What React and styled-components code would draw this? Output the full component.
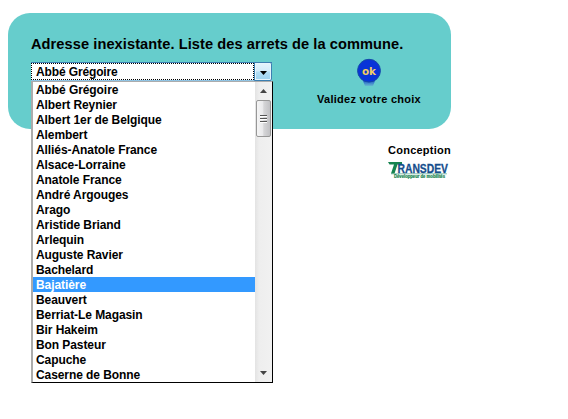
import React from 'react';
import styled, { createGlobalStyle } from 'styled-components';

const GlobalStyle = createGlobalStyle`
  * { box-sizing: border-box; }
  body {
    margin: 0;
    background: #fff;
    color: #000;
    font-family: "Liberation Sans", Arial, sans-serif;
    font-weight: bold;
    overflow: hidden;
  }
`;

const Page = styled.main`
  width: 568px;
  height: 419px;
  padding: 13px 0 0 8px;
`;

const Panel = styled.section`
  width: 443px;
  height: 116px;
  padding: 22px 0 0 23px;
  border-radius: 22px;
  background: #66cdcc;
`;

const Title = styled.h1`
  margin: 0;
  height: 27px;
  font-size: 14.6px;
  line-height: 18px;
  letter-spacing: 0.08px;
  white-space: nowrap;
`;

const Fields = styled.div`
  display: flex;
`;

const Select = styled.div`
  position: relative;
  display: flex;
  width: 241px;
  height: 19px;
  background: #fff;
  border-top: 1px solid #3c7fb1;
  border-bottom: 1px solid #8fc3e3;
`;

const Value = styled.div`
  flex: 1;
  padding-left: 4px;
  border: 1px dotted #000;
  font-size: 12px;
  line-height: 16px;
  letter-spacing: -0.13px;
`;

const DropButton = styled.div`
  display: flex;
  align-items: center;
  justify-content: center;
  width: 18px;
  height: 19px;
  margin-top: -1px;
  padding-top: 2px;
  border: 1px solid #3c7fb1;
  border-radius: 0 2px 2px 0;
  box-shadow: inset 0 0 0 1px #e5f5fd;
  background: linear-gradient(#e5f4fc 0%, #d2ecfa 48%, #b3def5 52%, #9cd3f0 100%);
`;

const Menu = styled.div`
  position: absolute;
  top: 18px;
  left: 0;
  display: flex;
  width: 242px;
  height: 302px;
  background: #fff;
  border: 1px solid #000;
  border-left: 2px solid #acacac;
  border-top: 1px solid #acacac;
`;

const Options = styled.ul`
  flex: 1;
  margin: 0;
  padding: 0;
  list-style: none;
`;

const Option = styled.li`
  height: 15px;
  padding: 1px 0 0 3px;
  font-size: 12px;
  line-height: 15px;
  letter-spacing: -0.08px;
  white-space: nowrap;
  color: ${(p) => (p.$active ? '#fff' : '#000')};
  background: ${(p) => (p.$active ? '#3399ff' : 'transparent')};
`;

const Scrollbar = styled.div`
  display: flex;
  flex-direction: column;
  align-items: center;
  width: 17px;
  padding: 7px 0 7px;
  background: linear-gradient(90deg, #e3e3e3, #eeeeee 25%, #f1f1f1);
`;

const Thumb = styled.div`
  display: flex;
  flex-direction: column;
  align-items: center;
  justify-content: center;
  gap: 1px;
  width: 15px;
  height: 37px;
  margin: 7px 0 auto;
  border: 1px solid #979797;
  border-radius: 2px;
  background: linear-gradient(90deg, #f5f5f5, #e9e9eb 45%, #d6d6d8 52%, #c1c1c4);
`;

const Grip = styled.span`
  width: 7px;
  height: 2px;
  border-top: 1px solid #555;
  border-bottom: 1px solid #fff;
`;

const Validate = styled.div`
  display: flex;
  flex-direction: column;
  align-items: center;
  width: 104px;
  margin: -4px 0 0 45px;
`;

const Label = styled.span`
  margin-top: 6px;
  font-size: 11px;
  line-height: 13px;
  letter-spacing: 0.25px;
  white-space: nowrap;
`;

const Credits = styled.footer`
  display: flex;
  flex-direction: column;
  align-items: flex-start;
  width: 64px;
  margin: 15px 0 0 380px;
`;

const CreditText = styled.span`
  font-size: 11px;
  line-height: 13px;
  letter-spacing: 0.25px;
`;

const stops = [
  'Abbé Grégoire', 'Albert Reynier', 'Albert 1er de Belgique', 'Alembert',
  'Alliés-Anatole France', 'Alsace-Lorraine', 'Anatole France', 'André Argouges',
  'Arago', 'Aristide Briand', 'Arlequin', 'Auguste Ravier', 'Bachelard',
  'Bajatière', 'Beauvert', 'Berriat-Le Magasin', 'Bir Hakeim', 'Bon Pasteur',
  'Capuche', 'Caserne de Bonne',
];

const Arrow = ({ up, fill = '#444' }) => (
  <svg width="7" height="4" viewBox="0 0 7 4">
    <path d={up ? 'M3.5 0L7 4H0Z' : 'M0 0H7L3.5 4Z'} fill={fill} />
  </svg>
);

const OkIcon = () => (
  <svg width="26" height="29" viewBox="0 0 26 29">
    <defs>
      <linearGradient id="foot" x1="0" y1="0" x2="0" y2="1">
        <stop offset="0" stopColor="#2560c8" />
        <stop offset="1" stopColor="#66b8d0" />
      </linearGradient>
    </defs>
    <path d="M7 23h12l-2 5H9z" fill="url(#foot)" />
    <circle cx="13" cy="12.7" r="11.4" fill="#0834d8" stroke="#1548a8" strokeWidth="1" />
    <text x="13" y="16.5" textAnchor="middle" fontFamily="DejaVu Sans" fontWeight="bold" fontSize="11" textLength="14" lengthAdjust="spacingAndGlyphs" fill="#f2cd62">ok</text>
  </svg>
);

const TransdevLogo = () => (
  <svg width="64" height="24" viewBox="0 0 64 24" overflow="visible">
    <path d="M0 5H14V7.5H9.5L6.5 16.5H3L6 7.5H1.5Z" fill="#16834f" />
    <text x="9.5" y="16" fontFamily="Liberation Sans" fontWeight="bold" fontSize="12.5" textLength="50.5" lengthAdjust="spacingAndGlyphs" fill="#154d8c" stroke="#154d8c" strokeWidth="0.3">RANSDEV</text>
    <path d="M3 16.8H59" stroke="#379278" strokeWidth="0.6" />
    <text x="6" y="21.3" fontFamily="Liberation Sans" fontWeight="bold" fontSize="4.8" textLength="51" lengthAdjust="spacingAndGlyphs" fill="#108048" stroke="#108048" strokeWidth="0.2">Développeur de mobilités</text>
  </svg>
);

export default function App() {
  return (
    <Page>
      <GlobalStyle />
      <Panel>
        <Title>Adresse inexistante. Liste des arrets de la commune.</Title>
        <Fields>
          <Select>
            <Value>Abbé Grégoire</Value>
            <DropButton><Arrow fill="#000" /></DropButton>
            <Menu>
              <Options>
                {stops.map((stop) => (
                  <Option key={stop} $active={stop === 'Bajatière'}>{stop}</Option>
                ))}
              </Options>
              <Scrollbar>
                <Arrow up />
                <Thumb><Grip /><Grip /><Grip /></Thumb>
                <Arrow />
              </Scrollbar>
            </Menu>
          </Select>
          <Validate>
            <OkIcon />
            <Label>Validez votre choix</Label>
          </Validate>
        </Fields>
      </Panel>
      <Credits>
        <CreditText>Conception</CreditText>
        <TransdevLogo />
      </Credits>
    </Page>
  );
}
